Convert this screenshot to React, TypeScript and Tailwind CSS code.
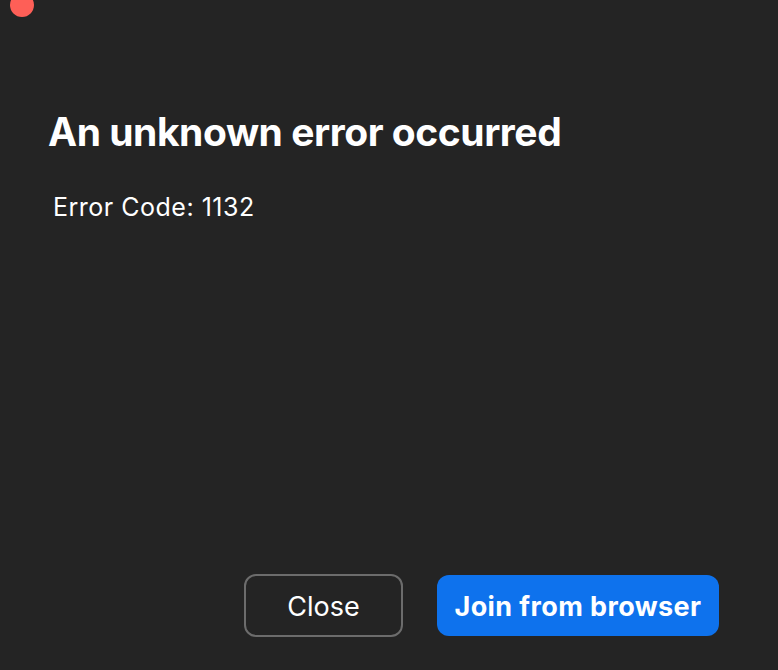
import React from "react";

export default function App() {
  return (
    <div
      className="relative w-[778px] h-[670px] bg-[#242424] overflow-hidden flex flex-col"
      style={{ fontFamily: "Inter, 'Noto Sans', sans-serif" }}
    >
      <div className="absolute left-[10px] top-[-7px] w-[24px] h-[24px] rounded-full bg-[#fe5f57]" />
      <div className="pl-[48px] pt-[108px]">
        <h1 className="text-[39px] leading-[48px] font-bold text-white tracking-[-0.45px]">
          An unknown error occurred
        </h1>
        <p className="mt-[36px] ml-[5px] text-[25px] leading-[30px] text-white tracking-[0.5px]">
          Error Code: 1132
        </p>
      </div>
      <div className="flex-1" />
      <div className="flex justify-end gap-[34px] pr-[59px] pb-[33px]">
        <button className="w-[159px] h-[63px] pt-[4px] rounded-[12px] border-2 border-[#6c6c6c] text-white text-[27px]">
          Close
        </button>
        <button className="w-[282px] h-[61px] mt-[1px] pt-[4px] rounded-[12px] bg-[#0e72ed] text-white text-[27px] font-bold tracking-[0.4px]">
          Join from browser
        </button>
      </div>
    </div>
  );
}
